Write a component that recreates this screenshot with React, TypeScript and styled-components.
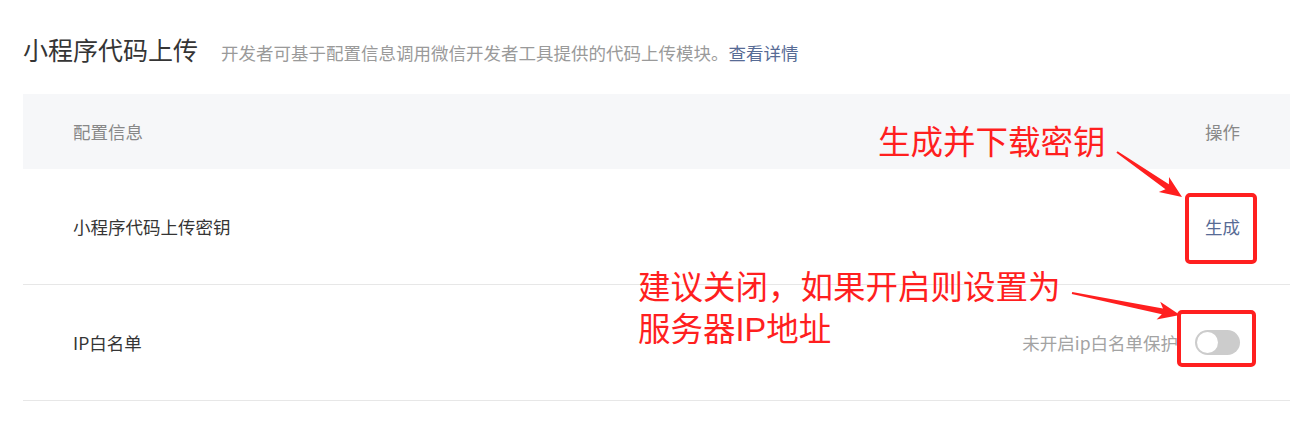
import React from 'react';
import styled, { createGlobalStyle } from 'styled-components';

const GlobalStyle = createGlobalStyle`
  html, body {
    margin: 0;
    padding: 0;
    background: #ffffff;
  }
  body {
    font-family: "Noto Sans CJK SC", "Noto Sans", sans-serif;
    color: #353535;
  }
`;

const Page = styled.div`
  position: relative;
  width: 1313px;
  height: 435px;
  box-sizing: border-box;
  padding: 32px 23px 0;
  overflow: hidden;
`;

const Heading = styled.div`
  display: flex;
  align-items: baseline;
  gap: 23px;
  height: 34px;
  margin-bottom: 28px;
`;

const Title = styled.h2`
  margin: 0;
  font-size: 25px;
  font-weight: 400;
  line-height: 34px;
  color: #353535;
`;

const Desc = styled.span`
  font-size: 17.5px;
  color: #9a9a9a;
`;

const Link = styled.a`
  color: #576b95;
  text-decoration: none;
  cursor: pointer;
`;

const Table = styled.div`
  display: flex;
  flex-direction: column;
`;

const Row = styled.div<{ $head?: boolean }>`
  display: flex;
  align-items: center;
  justify-content: space-between;
  box-sizing: border-box;
  padding: 0 50px;
  height: ${(p) => (p.$head ? '75px' : '116px')};
  background: ${(p) => (p.$head ? '#f6f7f9' : 'transparent')};
  border-bottom: ${(p) => (p.$head ? 'none' : '1px solid #e7e7e7')};
  font-size: 17.5px;
  color: ${(p) => (p.$head ? '#888888' : '#353535')};
`;

const Actions = styled.div`
  display: flex;
  align-items: center;
  gap: 17px;
`;

const Hint = styled.span`
  font-size: 17.5px;
  color: #a3a3a3;
`;

const Switch = styled.span<{ $on?: boolean }>`
  position: relative;
  display: inline-block;
  width: 45px;
  height: 25px;
  border-radius: 13px;
  background: ${(p) => (p.$on ? '#07c160' : '#cccccc')};

  &::after {
    content: '';
    position: absolute;
    top: 2px;
    left: ${(p) => (p.$on ? '22px' : '2px')};
    width: 21px;
    height: 21px;
    border-radius: 50%;
    background: #ffffff;
  }
`;

/* annotation layer drawn over the screenshot */
const Overlay = styled.div`
  position: absolute;
  inset: 0;
  pointer-events: none;
`;

const Note = styled.div<{ $x: number; $y: number }>`
  position: absolute;
  left: ${(p) => p.$x}px;
  top: ${(p) => p.$y}px;
  font-family: "Liberation Sans", "Noto Sans CJK SC", sans-serif;
  font-size: 32.5px;
  line-height: 36px;
  color: #ff1f1f;
  white-space: nowrap;
`;

const Frame = styled.div<{ $x: number; $y: number; $w: number; $h: number }>`
  position: absolute;
  left: ${(p) => p.$x}px;
  top: ${(p) => p.$y}px;
  width: ${(p) => p.$w}px;
  height: ${(p) => p.$h}px;
  box-sizing: border-box;
  border: 4px solid #ff1f1f;
  border-radius: 5px;
`;

const Arrows = styled.svg`
  position: absolute;
  left: 0;
  top: 0;
`;

const arrowPoints = (
  tx: number,
  ty: number,
  hx: number,
  hy: number,
) => {
  const dx = hx - tx;
  const dy = hy - ty;
  const len = Math.hypot(dx, dy);
  const ux = dx / len;
  const uy = dy / len;
  const nx = -uy;
  const ny = ux;
  const base = [hx - 22 * ux, hy - 22 * uy];
  const neck = [hx - 18 * ux, hy - 18 * uy];
  const pts = [
    [tx + nx, ty + ny],
    [neck[0] + 3 * nx, neck[1] + 3 * ny],
    [base[0] + 9 * nx, base[1] + 9 * ny],
    [hx, hy],
    [base[0] - 9 * nx, base[1] - 9 * ny],
    [neck[0] - 3 * nx, neck[1] - 3 * ny],
    [tx - nx, ty - ny],
  ];
  return pts.map((p) => p.map((v) => v.toFixed(1)).join(',')).join(' ');
};

const App = () => (
  <>
    <GlobalStyle />
    <Page>
      <Heading>
        <Title>小程序代码上传</Title>
        <Desc>
          开发者可基于配置信息调用微信开发者工具提供的代码上传模块。<Link>查看详情</Link>
        </Desc>
      </Heading>
      <Table>
        <Row $head>
          <span>配置信息</span>
          <span>操作</span>
        </Row>
        <Row>
          <span>小程序代码上传密钥</span>
          <Link>生成</Link>
        </Row>
        <Row>
          <span>IP白名单</span>
          <Actions>
            <Hint>未开启ip白名单保护</Hint>
            <Switch />
          </Actions>
        </Row>
      </Table>
      <Overlay>
        <Note $x={878} $y={125}>生成并下载密钥</Note>
        <Note $x={638} $y={270}>建议关闭，如果开启则设置为</Note>
        <Note $x={638} $y={312}>服务器IP地址</Note>
        <Frame $x={1185} $y={193} $w={72} $h={71} />
        <Frame $x={1177} $y={310} $w={79} $h={57} />
        <Arrows width={1313} height={435} viewBox='0 0 1313 435'>
          <polygon points={arrowPoints(1117, 152, 1182, 197)} fill='#ff1f1f' />
          <polygon points={arrowPoints(1072, 293, 1180, 315)} fill='#ff1f1f' />
        </Arrows>
      </Overlay>
    </Page>
  </>
);

export default App;
